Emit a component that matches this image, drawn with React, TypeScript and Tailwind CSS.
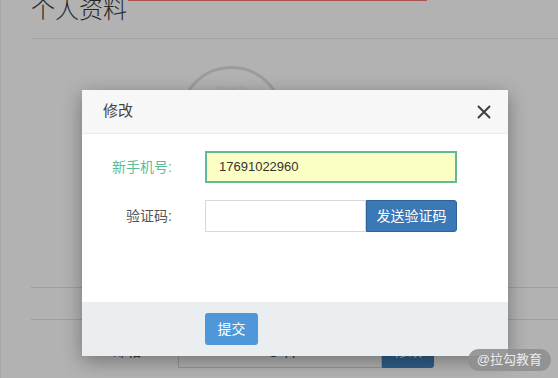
const font = "font-['Liberation_Sans','Noto_Sans_CJK_SC',sans-serif]";

function CloseIcon() {
  return (
    <svg width="14" height="14" viewBox="0 0 14 14" className="text-[#3f3f3f]">
      <path d="M1.5 1.5 L12.5 12.5 M12.5 1.5 L1.5 12.5" stroke="currentColor" strokeWidth="2" strokeLinecap="round" />
    </svg>
  );
}

function Modal() {
  return (
    <div className="absolute left-[81px] top-[90px] w-[426px] bg-white shadow-[0_5px_18px_rgba(0,0,0,0.35)]">
      <div className="flex h-[44px] items-center justify-between border-b border-[#ececec] bg-[#f7f7f7] pl-[21px] pr-[17px]">
        <span className="text-[15px] text-[#444]">修改</span>
        <CloseIcon />
      </div>
      <div className="flex h-[168px] flex-col gap-[17px] pt-[17px]">
        <div className="flex items-center">
          <label className="w-[90px] text-right text-[14px] text-[#5bbd98]">新手机号:</label>
          <div className="ml-[33px] flex h-[32px] w-[252px] items-center border-2 border-[#63b997] bg-[#fbffc4] pl-[12px] text-[13px] text-[#333]">
            17691022960
          </div>
        </div>
        <div className="flex items-center">
          <label className="w-[90px] text-right text-[14px] text-[#555]">验证码:</label>
          <div className="ml-[33px] flex h-[32px]">
            <div className="h-full w-[161px] border border-[#d6d6de] bg-white" />
            <button className="h-full w-[91px] rounded-r-[3px] border border-[#2e6399] bg-[#3a78b6] text-[14px] text-white">
              发送验证码
            </button>
          </div>
        </div>
      </div>
      <div className="flex h-[54px] items-center bg-[#ebeef0] pl-[123px]">
        <button className="h-[32px] w-[53px] rounded-[3px] bg-[#4e97da] text-[14px] text-white">提交</button>
      </div>
    </div>
  );
}

export default function App() {
  return (
    <div className={`relative h-[378px] w-[558px] overflow-hidden border-l border-[#a6a6a6] bg-[#b2b2b2] ${font}`}>
      <div className="pl-[30px]">
        <div className="flex h-[39px] items-start border-b border-[#a2a2a2]">
          <h1 className="-mt-[4px] text-[24px] leading-[28px] font-light text-[#262626]">个人资料</h1>
          <div className="-mt-[1px] ml-[1px] h-[2px] w-[299px] bg-[#a7574f]" />
        </div>
        <div className="h-[249px] border-b border-[#9e9e9e] pl-[148px] pt-[27px]">
          <div className="flex h-[105px] w-[105px] items-start justify-center rounded-full border-[3px] border-[#9c9ca0] pt-[14px]">
            <span className="text-[9px] text-[#a4a4a4]">Nunkdo</span>
          </div>
        </div>
        <div className="h-[32px] border-b border-[#9e9e9e]" />
        <div className="flex items-center pt-[14px]">
          <label className="w-[114px] text-right text-[14px] text-[#262626]">邮箱:</label>
          <div className="ml-[33px] flex h-[34px]">
            <div className="flex h-full w-[204px] items-center border border-[#949494] bg-[#b0b0b0] pl-[16px] text-[13px] text-[#2a2a2a]">
              1766326445@qq.com
            </div>
            <button className="h-full w-[52px] rounded-r-[3px] bg-[#2f5d88] text-[14px] text-[#9fb4c8]">修改</button>
          </div>
        </div>
      </div>
      <Modal />
      <div className="absolute right-[7px] bottom-[7px] flex h-[22px] items-center rounded-full bg-[#8f8f8f]/90 px-[9px] text-[13px] text-[#ececec]">
        @拉勾教育
      </div>
    </div>
  );
}
